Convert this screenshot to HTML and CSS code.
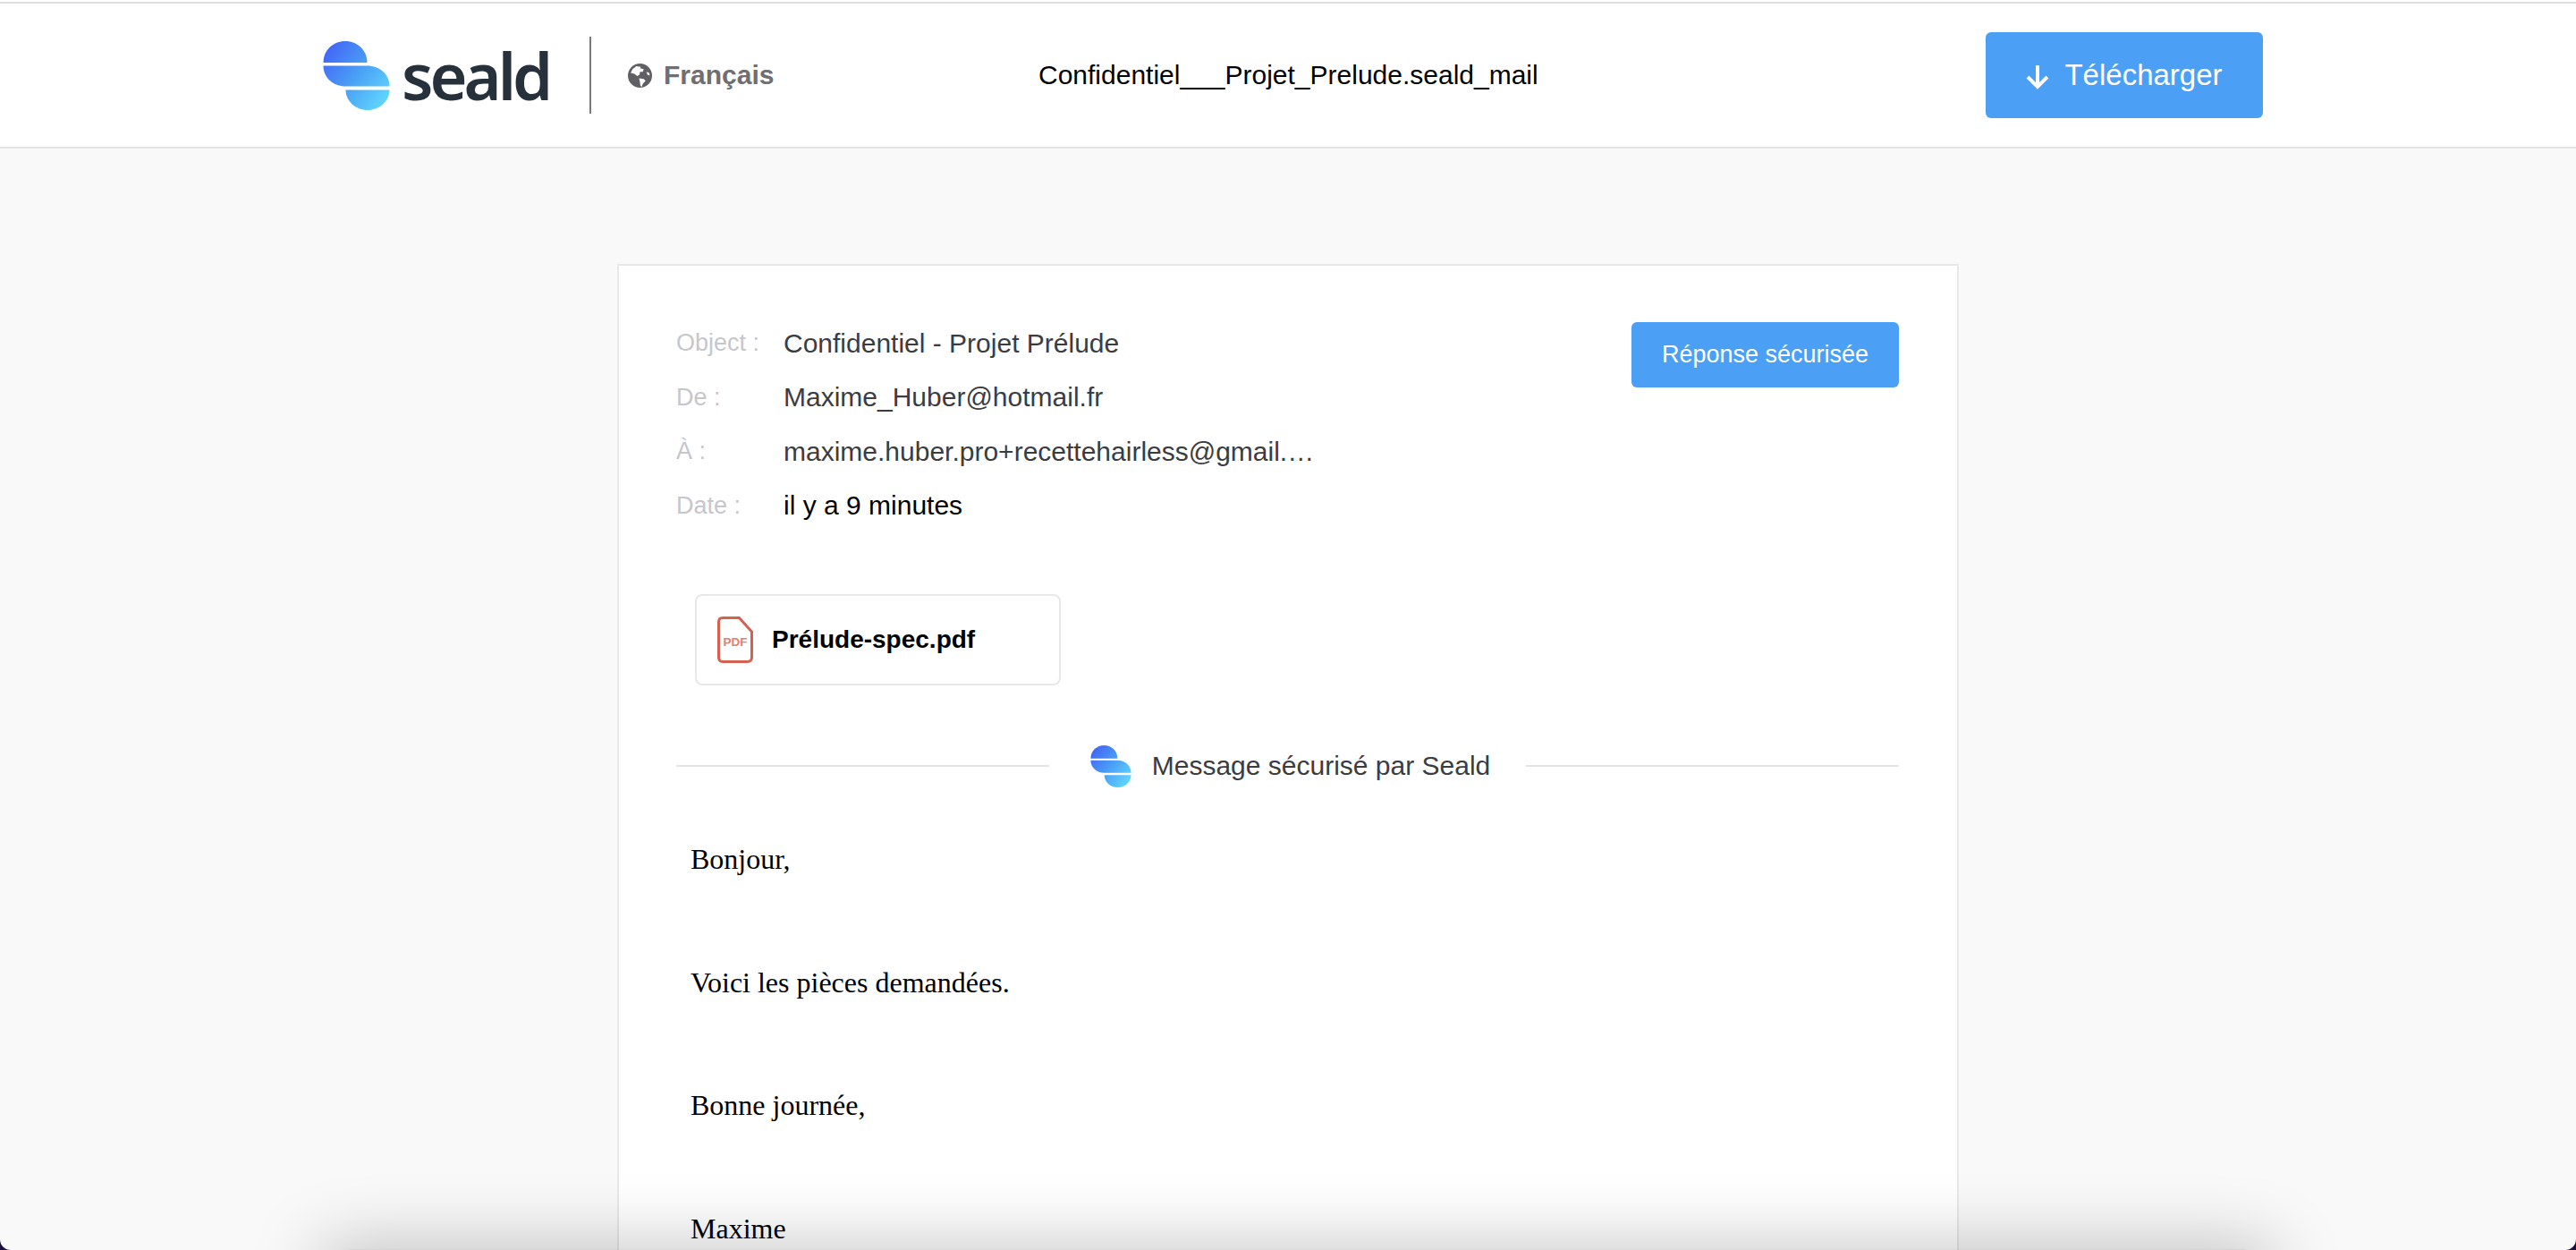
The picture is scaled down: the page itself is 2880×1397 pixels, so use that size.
FILE: index.html
```html
<!DOCTYPE html><html lang="fr">
<head><title>Confidentiel___Projet_Prelude.seald_mail</title>
	<meta charset="utf-8">
	<link rel="stylesheet" href="styles.css">
</head><body>
<svg class="defs" width="0" height="0">
	<defs>
		<linearGradient id="sg" gradientUnits="userSpaceOnUse" x1="0" y1="10" x2="74" y2="66">
			<stop offset="0" stop-color="#4263f5"/>
			<stop offset="0.5" stop-color="#4a9ff5"/>
			<stop offset="1" stop-color="#61daff"/>
		</linearGradient>
		<symbol id="mark" viewBox="0 0 74 77">
			<path fill="url(#sg)" d="M0 24C0 10 11 0 24.500 0S49 10 49 24Z"/>
			<path fill="url(#sg)" d="M0 27.500H49C63 27.500 74 37 74 50.500H25C11 50.500 0 41 0 27.500Z"/>
			<path fill="url(#sg)" d="M25 54.500H74C74 67 63 77 49.500 77S25 67 25 54.500Z"/>
		</symbol>
	</defs>
</svg>
<header class="topbar">
	<div class="topbar-in">
		<div class="brand">
			<svg class="logo"><use href="#mark"/></svg>
			<span class="brandname">seald</span>
		</div>
		<div class="lang">
			<svg class="globe" viewBox="0 0 26 26">
				<circle cx="13" cy="13" r="13" fill="#5f5f64"/>
				<path fill="#fff" d="M5 6L9 3L14 3.500L13 5L17 6L16 9L13 9L12.500 12L10 13.500L7 11L3 10ZM12 16L17 16.500L19 18.500L16 22L15 25L13.500 24L13 20ZM20 9L23 10L23.500 13L21 12Z"/>
			</svg>
			<span>Français</span>
		</div>
		<div class="filename">Confidentiel___Projet_Prelude.seald_mail</div>
		<button class="btn btn-dl">
			<svg class="arrow" viewBox="0 0 26 28"><path d="M13 1V25M2 14L13 25L24 14" fill="none" stroke="#fff" stroke-width="4"/></svg>
			Télécharger
		</button>
	</div>
</header>
<main class="card">
	<div class="head">
		<div class="meta">
			<div class="row"><span class="lbl">Object :</span><span class="val">Confidentiel - Projet Prélude</span></div>
			<div class="row"><span class="lbl">De :</span><span class="val">Maxime_Huber@hotmail.fr</span></div>
			<div class="row"><span class="lbl">À :</span><span class="val">maxime.huber.pro+recettehairless@gmail.…</span></div>
			<div class="row"><span class="lbl">Date :</span><span class="val black">il y a 9 minutes</span></div>
		</div>
		<button class="btn btn-reply">Réponse sécurisée</button>
	</div>
	<div class="attach">
		<svg class="pdf" viewBox="0 0 40 52">
			<path d="M6 1.500H24.500L38.500 17V45.500Q38.500 50.500 33.500 50.500H6Q1.500 50.500 1.500 45.500V6Q1.500 1.500 6 1.500Z" fill="none" stroke="#d4604f" stroke-width="3"/>
			<text x="20" y="33" class="pdftxt">PDF</text>
		</svg>
		<b>Prélude-spec.pdf</b>
	</div>
	<div class="sep">
		<i></i>
		<svg class="logo-sm"><use href="#mark"/></svg>
		<span>Message sécurisé par Seald</span>
		<i></i>
	</div>
	<div class="mail">
		<p>Bonjour,</p>
		<p>Voici les pièces demandées.</p>
		<p>Bonne journée,</p>
		<p class="last">Maxime</p>
	</div>
</main>
<div class="dockshadow"></div>
</body></html>
```
FILE: styles.css
```css
html{background:#1a1140;height:1397px;overflow:hidden;}
html,body{margin:0;padding:0;}
body{height:1397px;box-sizing:border-box;padding-top:2px;overflow:hidden;background:linear-gradient(#fff 2px,#f9f9f9 2px);font-family:"Liberation Sans",Arial,sans-serif;position:relative;border-radius:0 0 12px 12px;}
.defs{position:absolute;}
.topbar{height:160px;background:#fff;border-top:2px solid #dedede;border-bottom:2px solid #e4e4e4;}
.topbar-in{margin-left:361px;height:100%;display:flex;align-items:center;}
.brand{display:flex;align-items:center;width:298px;height:86px;border-right:2px solid #77777c;}
.logo{width:75px;height:77px;}
.brandname{font-family:"Noto Sans",sans-serif;font-weight:600;font-size:72px;color:#27313b;margin-left:13px;letter-spacing:-4px;line-height:1;}
.lang{display:flex;align-items:center;gap:13px;margin-left:41px;width:459px;font-weight:bold;font-size:30px;color:#6e6e73;}
.globe{width:27px;height:27px;}
.filename{font-size:30px;color:#000;width:1059px;}
.btn{background:#4b9ff5;color:#fff;border:none;font-family:inherit;border-radius:6px;}
.btn-dl{width:310px;height:96px;font-size:33px;display:flex;align-items:center;justify-content:center;gap:17px;}
.arrow{width:26px;height:28px;margin-top:4px;}
.card{width:1500px;height:1102px;overflow:hidden;margin:129px 0 0 690px;background:#fff;border:2px solid #e8e8e8;border-bottom:none;box-sizing:border-box;padding:56.500px 65px 0 64px;}
.head{display:flex;justify-content:space-between;align-items:flex-start;}
.row{display:flex;align-items:center;height:60.500px;font-size:30px;color:#3c3c3f;}
.lbl{width:120px;font-size:27px;color:#c6c6cc;}
.black{color:#000;}
.btn-reply{width:299px;height:73px;font-size:27px;margin-top:6.500px;}
.attach{width:409px;height:102px;margin:68px 0 0 21px;border:2px solid #e8e8e8;border-radius:8px;box-sizing:border-box;display:flex;align-items:center;padding-left:23px;gap:21px;font-size:28px;color:#000;}
.pdf{width:40px;height:52px;}
.pdftxt{font-size:13.500px;font-weight:bold;fill:#e08070;text-anchor:middle;font-family:"Liberation Sans",sans-serif;}
.sep{display:flex;align-items:center;margin-top:57.500px;height:66px;font-size:30px;color:#3c3c3f;}
.sep i{flex:1;height:2px;background:#e4e4e4;}
.logo-sm{width:46px;height:47px;margin:0 23px 0 46px;}
.sep span{margin-right:40px;}
.mail{font-family:"Liberation Serif","Times New Roman",serif;font-size:32px;color:#000;margin:54px 0 0 16px;}
.mail p{margin:0;height:137.700px;line-height:34px;}
.mail .last{height:34px;}
.dockshadow{position:absolute;left:390px;right:370px;bottom:0;height:1px;background:rgba(0,0,0,0.14);box-shadow:0 30px 80px 30px rgba(0,0,0,0.28);}
```
